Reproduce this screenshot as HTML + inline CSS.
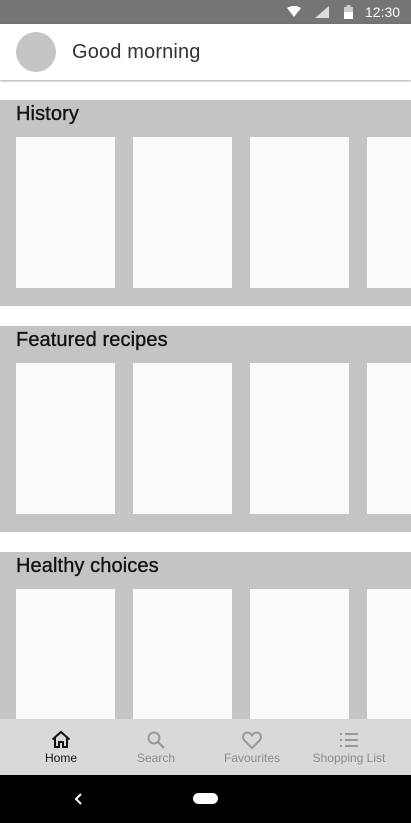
<!DOCTYPE html>
<html><head><meta charset="utf-8"><style>
*{margin:0;padding:0;box-sizing:border-box}
body{width:411px;height:823px;overflow:hidden;position:relative;background:#fff;font-family:"Liberation Sans",sans-serif}
.abs{position:absolute}
.sb{top:0;left:0;width:411px;height:24px;background:#757575;color:#fff;font-size:14px}
.hdr{top:24px;left:0;width:411px;height:56px;background:#fff;box-shadow:0 1px 2px rgba(0,0,0,.35);z-index:2}
.sec{left:0;width:411px;height:206px;background:#c4c4c4}
.sec h2{position:absolute;left:16px;top:2px;font-size:20px;font-weight:normal;color:#111;line-height:24px;-webkit-text-stroke:0.35px #111;letter-spacing:0.1px}
.card{position:absolute;top:37px;width:99px;height:151px;background:#fafafa}
.nav{top:719px;left:0;width:411px;height:56px;background:#d9d9d9}
.it{position:absolute;top:0;width:100px;height:56px;text-align:center;font-size:12px;color:#8a8a8a}
.it svg{position:absolute;top:9px;left:38px}
.it span{position:absolute;top:32px;left:0;width:100px}
.sys{top:775px;left:0;width:411px;height:48px;background:#000}
</style></head><body>
<div class="abs sb">
<svg class="abs" style="left:287px;top:6px" width="14" height="12"><path d="M0 2 Q7 -2 14 2 L7 11 Z" fill="#fff"/></svg>
<svg class="abs" style="left:315px;top:6px" width="14" height="12"><path d="M14 0 L14 12 L0 12 Z" fill="#ddd"/></svg>
<svg class="abs" style="left:344px;top:5px" width="9" height="14"><rect x="2.5" y="0" width="4" height="2" fill="#ccc"/><rect x="0" y="2" width="9" height="12" fill="#ccc"/><rect x="0" y="7" width="9" height="7" fill="#fff"/></svg>
<div class="abs" style="left:365px;top:4px;font-size:14px">12:30</div>
</div>
<div class="abs hdr">
<div class="abs" style="left:16px;top:8px;width:40px;height:40px;border-radius:50%;background:#c4c4c4"></div>
<div class="abs" style="left:72px;top:17px;font-size:20px;color:#333;letter-spacing:0.15px">Good morning</div>
</div>
<div class="abs sec" style="top:100px"><h2>History</h2><div class="card" style="left:16px"></div><div class="card" style="left:133px"></div><div class="card" style="left:250px"></div><div class="card" style="left:367px"></div></div>
<div class="abs sec" style="top:326px"><h2>Featured recipes</h2><div class="card" style="left:16px"></div><div class="card" style="left:133px"></div><div class="card" style="left:250px"></div><div class="card" style="left:367px"></div></div>
<div class="abs sec" style="top:552px"><h2>Healthy choices</h2><div class="card" style="left:16px"></div><div class="card" style="left:133px"></div><div class="card" style="left:250px"></div><div class="card" style="left:367px"></div></div>
<div class="abs nav">
<div class="it" style="left:11px;color:#111"><svg width="24" height="24" viewBox="0 0 24 24"><path d="M3.5 11.5 L12 4 L20.5 11.5 M6 10 V19 H10 V14 H14 V19 H18 V10" fill="none" stroke="#111" stroke-width="2"/></svg><span>Home</span></div>
<div class="it" style="left:106px"><svg width="24" height="24" viewBox="0 0 24 24"><circle cx="10" cy="10" r="5.5" fill="none" stroke="#999" stroke-width="2"/><path d="M14 14 L20 20" stroke="#999" stroke-width="2.2"/></svg><span>Search</span></div>
<div class="it" style="left:202px"><svg width="24" height="24" viewBox="0 0 24 24"><path d="M12 20 L4.5 12.5 C1.5 9.5 3.5 4.5 7.5 4.5 C9.5 4.5 11 6 12 7.5 C13 6 14.5 4.5 16.5 4.5 C20.5 4.5 22.5 9.5 19.5 12.5 Z" fill="none" stroke="#999" stroke-width="2"/></svg><span>Favourites</span></div>
<div class="it" style="left:299px"><svg width="24" height="24" viewBox="0 0 24 24"><path d="M3 6h2M3 12h2M3 18h2M8 6h13M8 12h13M8 18h13" stroke="#999" stroke-width="2"/></svg><span>Shopping List</span></div>
</div>
<div class="abs sys">
<svg class="abs" style="left:73px;top:17px" width="12" height="14"><path d="M8 2 L3 7 L8 12" fill="none" stroke="#fff" stroke-width="2"/></svg>
<div class="abs" style="left:193px;top:18px;width:25px;height:11px;border-radius:6px;background:#fff"></div>
</div>
</body></html>
